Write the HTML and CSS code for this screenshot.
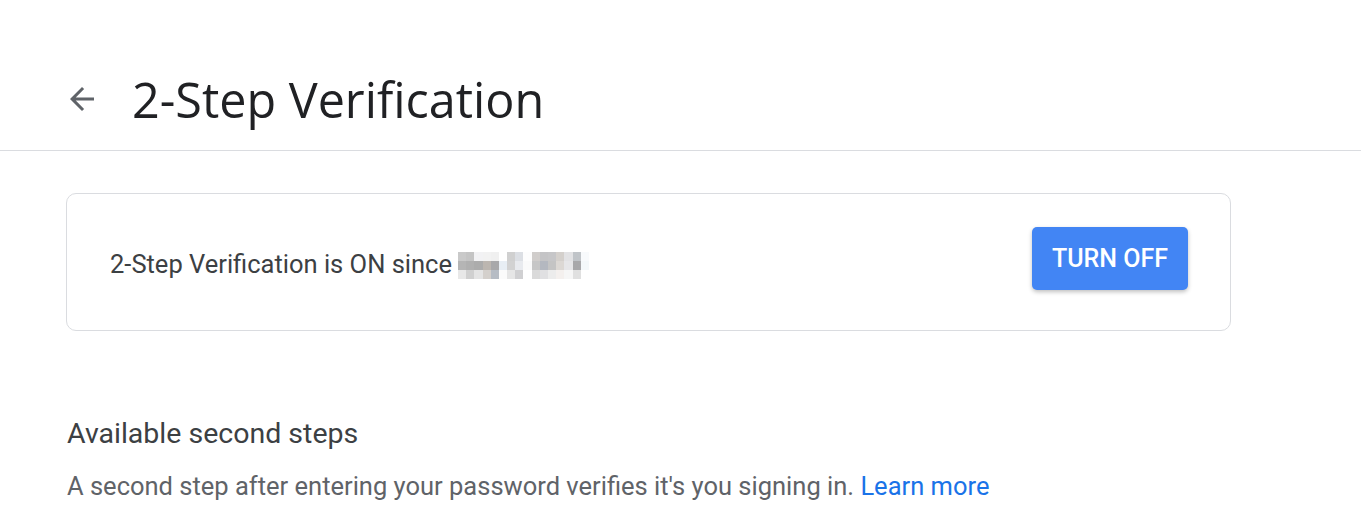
FILE: index.html
```html
<!DOCTYPE html>
<html lang="en">
<head>
    <meta charset="UTF-8">
    <meta name="viewport" content="width=device-width, initial-scale=1.0">
    <title>2-Step Verification</title>
    <link rel="stylesheet" href="styles.css">
</head>
<body>
    <header class="top-bar">
        <a class="back" href="#" aria-label="Back">
            <svg width="36" height="36" viewBox="0 0 24 24"><path d="M20 11H7.83l5.59-5.59L12 4l-8 8 8 8 1.41-1.41L7.83 13H20v-2z" fill="#5f6368"/></svg>
        </a>
        <h1>2-Step Verification</h1>
    </header>

    <main class="content">
        <section class="status-card">
            <p class="status-text">2-Step Verification is ON since
                <!-- date is pixelated in the original -->
                <span class="blurred">
                    <span></span><span></span><span></span><span></span><span></span><span></span><span></span><span></span>
                    <span></span><span></span><span></span><span></span><span></span><span></span><span></span><span></span>
                </span>
            </p>
            <button class="turn-off">TURN OFF</button>
        </section>

        <section class="steps">
            <h2>Available second steps</h2>
            <p>A second step after entering your password verifies it's you signing in. <a href="#">Learn more</a></p>
        </section>
    </main>
</body>
</html>
```

FILE: styles.css
```css
body {
    margin: 0;
    font-family: Roboto, "Liberation Sans", Arial, sans-serif;
    background: #fff;
    color: #202124;
}
.top-bar {
    display: flex;
    align-items: center;
    height: 151px;
    padding: 48px 0 0 64px;
    border-bottom: 1px solid #dadce0;
    box-sizing: border-box;
}
.back {
    display: flex;
    width: 36px;
    height: 36px;
    margin-right: 32px;
}
h1 {
    margin: 0;
    font-family: "Open Sans", Roboto, sans-serif;
    font-weight: 400;
    font-size: 48.5px;
    color: #202124;
}
.content {
    padding: 42px 0 0 66px;
    width: 1165px;
}
.status-card {
    display: flex;
    align-items: center;
    justify-content: space-between;
    height: 138px;
    box-sizing: border-box;
    padding: 0 42px 0 43px;
    border: 1px solid #dadce0;
    border-radius: 10px;
}
.status-text {
    margin: 4px 0 0;
    font-size: 25.5px;
    color: #3c4043;
    display: flex;
    align-items: center;
    gap: 6px;
}
.blurred {
    display: flex;
    height: 27px;
    margin-top: 2px;
}
.blurred span {
    width: 8.2px;
    height: 27px;
    background: #eee;
}
.blurred span:nth-child(1)  { background: linear-gradient(#c9c9c9 33%, #b5b5b5 33% 66%, #e8e8e8 66%); }
.blurred span:nth-child(2)  { background: linear-gradient(#c4c4c4 33%, #b0b0b0 33% 66%, #d0d0d0 66%); }
.blurred span:nth-child(3)  { background: linear-gradient(#f2f2f4 33%, #acacac 33% 66%, #e4e4e4 66%); }
.blurred span:nth-child(4)  { background: linear-gradient(#f2f2f2 33%, #bcb6b0 33% 66%, #d4d0cc 66%); }
.blurred span:nth-child(5)  { background: linear-gradient(#f0f0f0 33%, #a8a8aa 33% 66%, #b6bcc4 66%); }
.blurred span:nth-child(6)  { background: linear-gradient(#ffffff 33%, #e8eef4 33% 66%, #fbfbfb 66%); }
.blurred span:nth-child(7)  { background: linear-gradient(#d0d0d0 33%, #d2d2d2 33% 66%, #e6e6e6 66%); }
.blurred span:nth-child(8)  { background: linear-gradient(#dcdfe4 33%, #e8eaee 33% 66%, #d0d0d2 66%); }
.blurred span:nth-child(9)  { background: linear-gradient(#fdfdfd 33%, #fafafa 33% 66%, #ffffff 66%); }
.blurred span:nth-child(10) { background: linear-gradient(#d0cdcb 33%, #c6c6c6 33% 66%, #dadada 66%); }
.blurred span:nth-child(11) { background: linear-gradient(#c4c4c6 33%, #b4b8c0 33% 66%, #e0e0e2 66%); }
.blurred span:nth-child(12) { background: linear-gradient(#c6c6c8 33%, #c4c4c4 33% 66%, #ececec 66%); }
.blurred span:nth-child(13) { background: linear-gradient(#d4d0cc 33%, #dcd8d4 33% 66%, #f4f0ee 66%); }
.blurred span:nth-child(14) { background: linear-gradient(#e2e2e4 33%, #e6e6e8 33% 66%, #f6f6f6 66%); }
.blurred span:nth-child(15) { background: linear-gradient(#c0c4c8 33%, #a8a8aa 33% 66%, #e0e0e0 66%); }
.blurred span:nth-child(16) { background: linear-gradient(#f8fafc 33%, #f4f8fa 33% 66%, #ffffff 66%); }
.turn-off {
    width: 156px;
    height: 63px;
    margin-top: -8px;
    border: none;
    border-radius: 5px;
    background: #4285f4;
    color: #fff;
    font-family: Roboto, sans-serif;
    font-size: 25px;
    font-weight: 500;
    box-shadow: 0 2px 4px rgba(0, 0, 0, 0.25);
    cursor: pointer;
}
.steps {
    margin-top: 86px;
    padding-left: 1px;
}
.steps h2 {
    margin: 0;
    font-size: 28.5px;
    font-weight: 400;
    color: #3c4043;
}
.steps p {
    margin: 21px 0 0;
    font-size: 25.5px;
    color: #5f6368;
}
.steps a {
    color: #1a73e8;
    text-decoration: none;
}
```
